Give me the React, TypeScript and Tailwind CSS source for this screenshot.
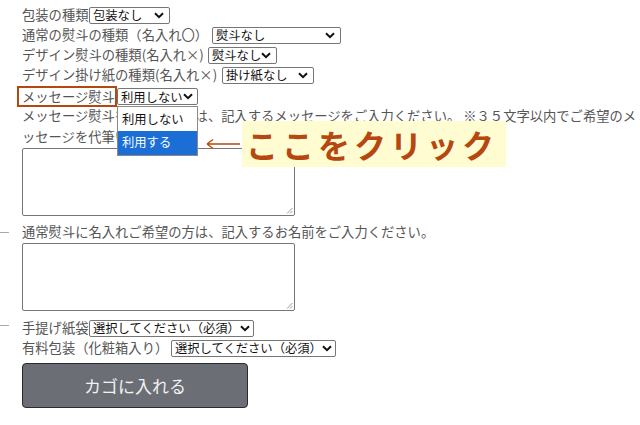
import type { ReactNode } from "react"

function Chevron() {
  return (
    <svg width="10" height="7" viewBox="0 0 10 7" className="shrink-0">
      <path d="M1 1.2 L5 5.2 L9 1.2" fill="none" stroke="#111" strokeWidth="2" />
    </svg>
  )
}

function Select({ value, width }: { value: string; width: string }) {
  return (
    <span
      className={`inline-flex items-center justify-between h-[17px] border border-[#767676] rounded-[2px] bg-white pl-[3px] pr-[5px] text-[12.3px] text-[#111] ${width}`}
    >
      <span className="leading-none whitespace-nowrap">{value}</span>
      <Chevron />
    </span>
  )
}

function Row({ label, labelWidth, children }: { label: string; labelWidth: string; children: ReactNode }) {
  return (
    <div className="flex items-center h-[20px] whitespace-nowrap">
      <span className={`shrink-0 ${labelWidth}`}>{label}</span>
      {children}
    </div>
  )
}

function TextArea() {
  return (
    <div className="relative w-[273px] h-[68px] border border-[#767676] rounded-[2px] bg-white">
      <svg width="7" height="7" viewBox="0 0 7 7" className="absolute right-[1px] bottom-[1px]">
        <path d="M6.5 1 L1 6.5 M6.5 4 L4 6.5" stroke="#999" strokeWidth="1" />
      </svg>
    </div>
  )
}

export default function App() {
  return (
    <div
      className="relative w-[640px] h-[425px] overflow-hidden bg-white text-[13.3px] text-[#555] pl-[22px] pt-[5px]"
      style={{ fontFamily: '"Noto Sans CJK JP", "Noto Sans", sans-serif' }}
    >
      <Row label="包装の種類" labelWidth="w-[67px]">
        <Select value="包装なし" width="w-[81px]" />
      </Row>
      <Row label="通常の熨斗の種類（名入れ〇）" labelWidth="w-[190px]">
        <Select value="熨斗なし" width="w-[129px]" />
      </Row>
      <Row label="デザイン熨斗の種類(名入れ×)" labelWidth="w-[186px]">
        <Select value="熨斗なし" width="w-[69px]" />
      </Row>
      <Row label="デザイン掛け紙の種類(名入れ×)" labelWidth="w-[200px]">
        <Select value="掛け紙なし" width="w-[92px]" />
      </Row>
      <div className="flex items-center h-[21px] whitespace-nowrap mt-[1px]">
        <span className="-ml-[5px] w-[100px] h-[21px] border-2 border-[#b5470f] pl-[3px] flex items-center">
          メッセージ熨斗
        </span>
        <span className="relative">
          <Select value="利用しない" width="w-[81px]" />
          {/* open dropdown list */}
          <div className="absolute left-0 top-[19px] w-[81px] bg-white border border-[#8a8a8a] z-10 text-[12.3px] text-[#111]">
            <div className="h-[23px] flex items-center pl-[4px] mt-[1px]">利用しない</div>
            <div className="h-[24px] flex items-center pl-[4px] bg-[#1a6ed6] text-white">利用する</div>
          </div>
        </span>
      </div>
      <div className="whitespace-nowrap h-[20px] flex items-center -mt-[1px]">
        メッセージ熨斗をご希望の方は、記入するメッセージをご入力ください。 ※３５文字以内でご希望のメ
      </div>
      <div className="whitespace-nowrap h-[22px] flex items-center">ッセージを代筆いたします。</div>
      <TextArea />
      <div className="relative whitespace-nowrap h-[20px] flex items-center mt-[6px]">
        <span className="absolute -left-[22px] w-[9px] border-t border-[#aaa]" />
        通常熨斗に名入れご希望の方は、記入するお名前をご入力ください。
      </div>
      <div className="mt-[1px]">
        <TextArea />
      </div>
      <div className="relative mt-[7px]">
        <span className="absolute -left-[22px] top-[7px] w-[9px] border-t border-[#aaa]" />
        <Row label="手提げ紙袋" labelWidth="w-[67px]">
          <Select value="選択してください（必須）" width="w-[165px]" />
        </Row>
      </div>
      <Row label="有料包装（化粧箱入り）" labelWidth="w-[149px]">
        <Select value="選択してください（必須）" width="w-[165px]" />
      </Row>
      <button className="mt-[5px] w-[226px] h-[45px] bg-[#6b6e75] border border-[#2b2b2b] rounded-[4px] text-[17px] text-[#f2f2f2]">
        カゴに入れる
      </button>

      {/* annotation */}
      <div className="absolute left-[205px] top-[121px] flex items-center">
        <svg width="35" height="12" viewBox="0 0 35 12">
          <path d="M2 6 H35 M2 6 L8 1.5 M2 6 L8 10.5" fill="none" stroke="#b5470f" strokeWidth="1.3" />
        </svg>
        <div className="ml-[2px] w-[264px] h-[46px] bg-[#fffcd2] flex items-center pl-[4px] text-[32px] font-bold tracking-[4px] text-[#b5470f]">
          ここをクリック
        </div>
      </div>
    </div>
  )
}
